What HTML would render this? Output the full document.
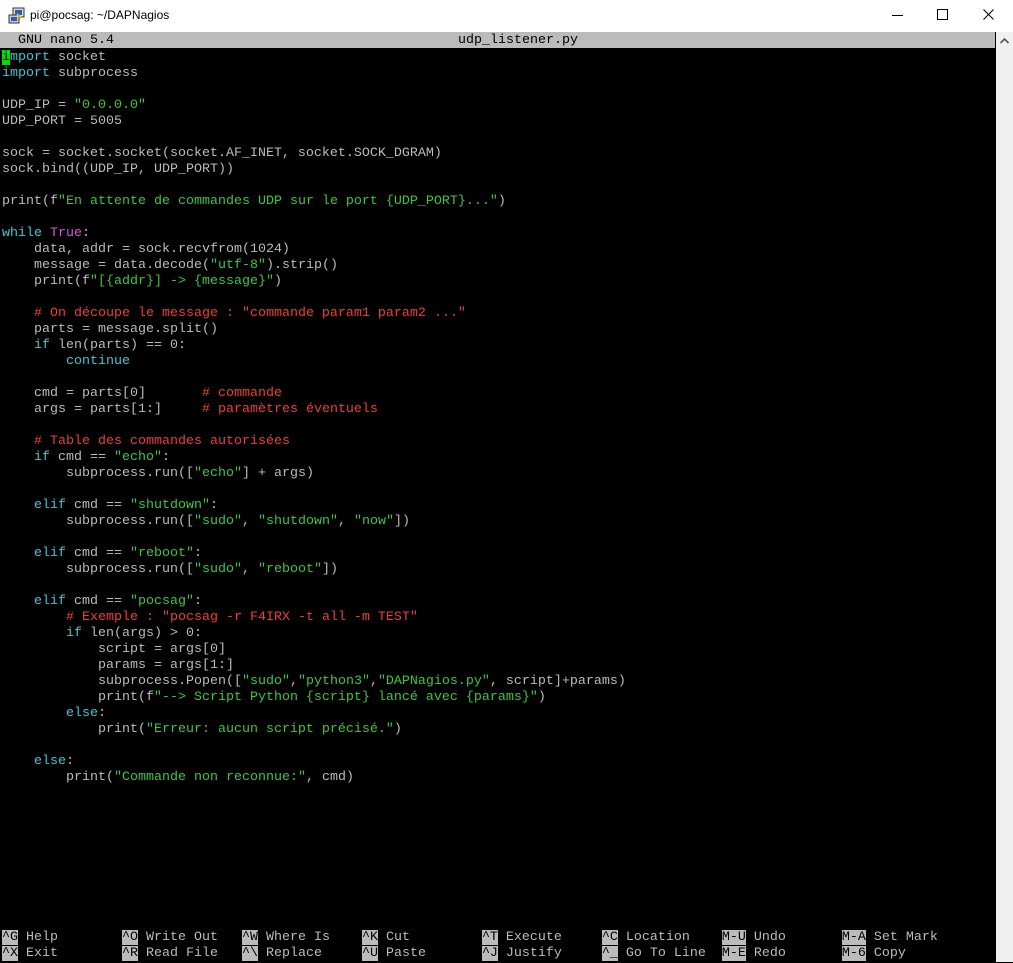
<!DOCTYPE html>
<html><head><meta charset="utf-8"><style>
html,body{margin:0;padding:0;width:1013px;height:962px;overflow:hidden;background:#000}
#title{position:absolute;left:0;top:0;width:1013px;height:32px;background:#fff;font-family:"Liberation Sans",sans-serif;font-size:12px;color:#000}
#title .t{position:absolute;left:30px;top:8px}
#term{position:absolute;left:0;top:32px;width:996px;height:930px;background:#000;border-top:1px solid #000}
#sb{position:absolute;left:996px;top:32px;width:17px;height:930px;background:#f0f0f0}
pre{margin:0;font-family:"Liberation Mono",monospace;font-size:13.33px;line-height:16px;color:#bbb;position:absolute;left:2px}
.k{color:#3ac8d8}.s{color:#3bc83b}.c{color:#f03c3c}.m{color:#e050e0}
#hdr{position:absolute;left:0;top:32px;width:995px;height:16px;background:#bbb}
#hdr pre{color:#000;top:1px}
.cur{background:#00e000;color:#000}
.key{background:#bbb;color:#000}
</style></head><body>
<div id="title">
<svg style="position:absolute;left:8px;top:7px" width="18" height="18" viewBox="0 0 18 18"><rect x="5" y="1" width="11" height="9" fill="#ddd" stroke="#333"/><rect x="7" y="3" width="7" height="5" fill="#2a5cc0"/><rect x="1" y="8" width="10" height="8" fill="#ccc" stroke="#333"/><rect x="3" y="10" width="6" height="4" fill="#2a5cc0"/><path d="M9 7 L13 11" stroke="#e0c000" stroke-width="2"/></svg>
<span class="t">pi@pocsag: ~/DAPNagios</span>
<svg style="position:absolute;left:892px;top:10px" width="12" height="12"><path d="M0 5.5H11" stroke="#000"/></svg>
<svg style="position:absolute;left:937px;top:9px" width="12" height="12"><rect x="0.5" y="0.5" width="10" height="10" fill="none" stroke="#000"/></svg>
<svg style="position:absolute;left:983px;top:9px" width="12" height="12"><path d="M0.5 0.5L10.5 10.5M10.5 0.5L0.5 10.5" stroke="#000"/></svg>
</div>
<div id="term"></div>
<div id="hdr"><pre>  GNU nano 5.4</pre><pre style="left:458px">udp_listener.py</pre></div>
<div id="sb"><svg style="position:absolute;left:4px;top:6px" width="9" height="6"><path d="M0.5 5L4.5 1L8.5 5" fill="none" stroke="#555" stroke-width="1.6"/></svg></div>
<pre style="top:50px"><span class="cur">i</span><span class="k">mport</span> socket
<span class="k">import</span> subprocess

UDP_IP = <span class="s">"0.0.0.0"</span>
UDP_PORT = 5005

sock = socket.socket(socket.AF_INET, socket.SOCK_DGRAM)
sock.bind((UDP_IP, UDP_PORT))

print(f<span class="s">"En attente de commandes UDP sur le port {UDP_PORT}..."</span>)

<span class="k">while</span> <span class="m">True</span>:
    data, addr = sock.recvfrom(1024)
    message = data.decode(<span class="s">"utf-8"</span>).strip()
    print(f<span class="s">"[{addr}] -&gt; {message}"</span>)

    <span class="c"># On découpe le message : "commande param1 param2 ..."</span>
    parts = message.split()
    <span class="k">if</span> len(parts) == 0:
        <span class="k">continue</span>

    cmd = parts[0]       <span class="c"># commande</span>
    args = parts[1:]     <span class="c"># paramètres éventuels</span>

    <span class="c"># Table des commandes autorisées</span>
    <span class="k">if</span> cmd == <span class="s">"echo"</span>:
        subprocess.run([<span class="s">"echo"</span>] + args)

    <span class="k">elif</span> cmd == <span class="s">"shutdown"</span>:
        subprocess.run([<span class="s">"sudo"</span>, <span class="s">"shutdown"</span>, <span class="s">"now"</span>])

    <span class="k">elif</span> cmd == <span class="s">"reboot"</span>:
        subprocess.run([<span class="s">"sudo"</span>, <span class="s">"reboot"</span>])

    <span class="k">elif</span> cmd == <span class="s">"pocsag"</span>:
        <span class="c"># Exemple : "pocsag -r F4IRX -t all -m TEST"</span>
        <span class="k">if</span> len(args) &gt; 0:
            script = args[0]
            params = args[1:]
            subprocess.Popen([<span class="s">"sudo"</span>,<span class="s">"python3"</span>,<span class="s">"DAPNagios.py"</span>, script]+params)
            print(f<span class="s">"--&gt; Script Python {script} lancé avec {params}"</span>)
        <span class="k">else</span>:
            print(<span class="s">"Erreur: aucun script précisé."</span>)

    <span class="k">else</span>:
        print(<span class="s">"Commande non reconnue:"</span>, cmd)</pre>
<pre style="top:930px"><span class="key">^G</span> Help        <span class="key">^O</span> Write Out   <span class="key">^W</span> Where Is    <span class="key">^K</span> Cut         <span class="key">^T</span> Execute     <span class="key">^C</span> Location    <span class="key">M-U</span> Undo       <span class="key">M-A</span> Set Mark
<span class="key">^X</span> Exit        <span class="key">^R</span> Read File   <span class="key">^\</span> Replace     <span class="key">^U</span> Paste       <span class="key">^J</span> Justify     <span class="key">^_</span> Go To Line  <span class="key">M-E</span> Redo       <span class="key">M-6</span> Copy</pre>
</body></html>
